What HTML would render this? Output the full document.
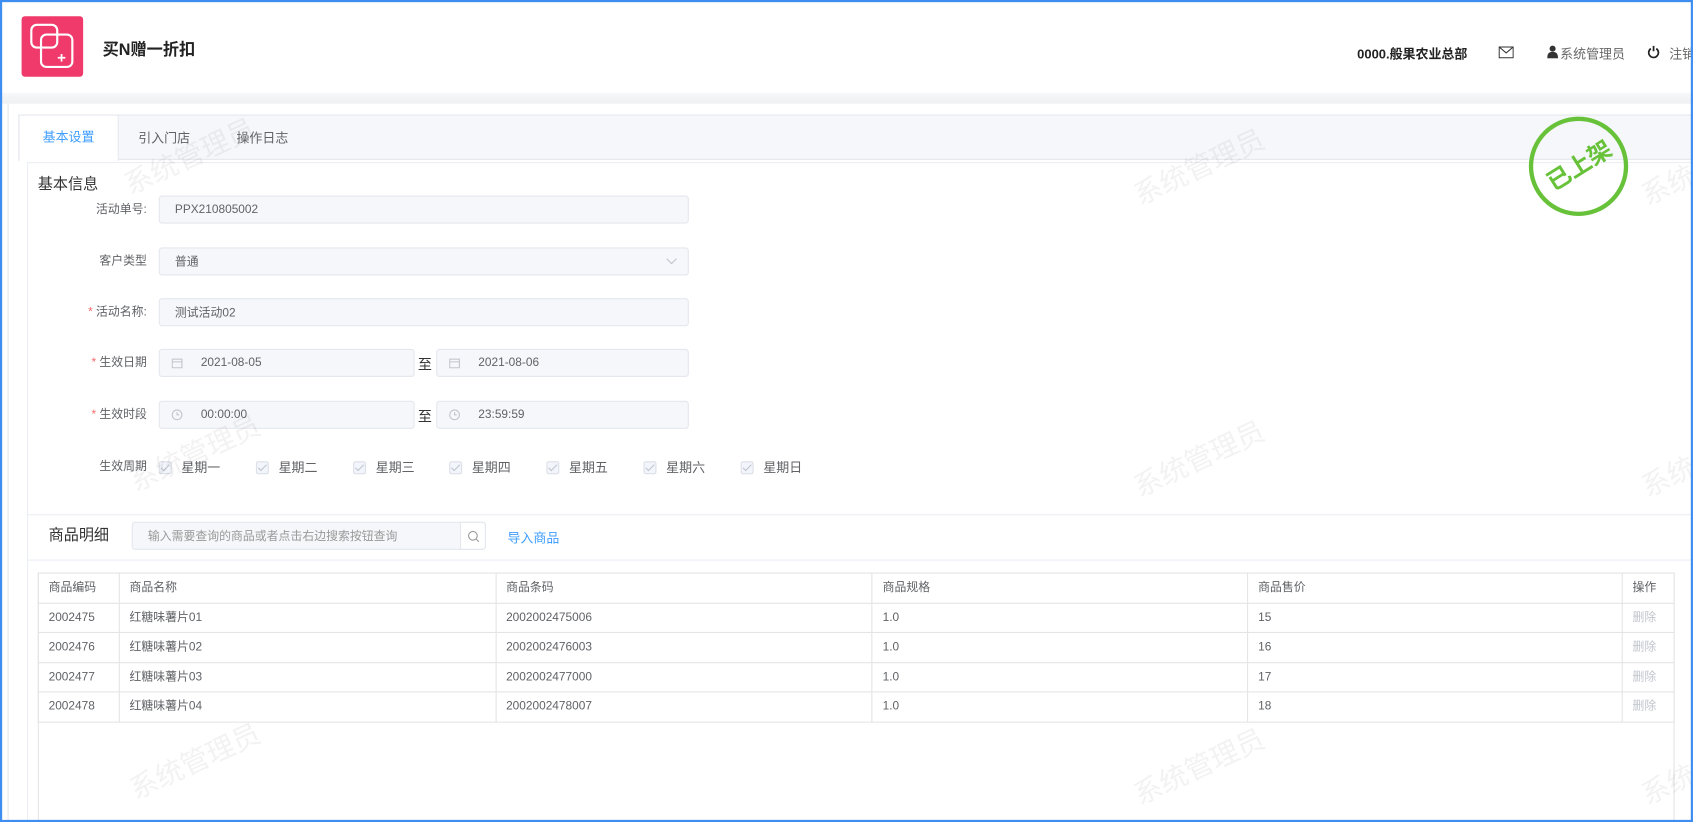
<!DOCTYPE html>
<html><head><meta charset="utf-8"><style>
*{margin:0;padding:0;box-sizing:border-box}
body{width:1693px;height:822px;overflow:hidden;background:#fff;font-family:"Liberation Sans","Noto Sans CJK SC",sans-serif;color:#606266}
#s{position:absolute;left:0;top:0;width:1568px;height:761px;transform:scale(1.0797,1.0802);transform-origin:0 0;overflow:hidden;background:#fff}
.a{position:absolute;white-space:nowrap}
.frame{position:absolute;left:0;top:0;width:1568px;height:761px;border:2px solid #3d8ef0;pointer-events:none;z-index:50}
.lbl{position:absolute;font-size:11px;color:#606266;text-align:right;width:120px;left:16px;line-height:26px}
.lbl i{color:#f56c6c;font-style:normal;margin-right:3px}
.inp{position:absolute;height:26px;background:#f5f7fa;border:1px solid #e4e7ed;border-radius:3px;font-size:11px;color:#606266;padding-left:14px;display:flex;align-items:center;white-space:nowrap}
.wm{position:absolute;font-size:26px;color:rgba(0,0,0,0.05);transform:rotate(-25deg);white-space:nowrap;z-index:40}
table{border-collapse:collapse;font-size:11px;color:#606266}
td{border:1px solid #e4e4e4;height:27.5px;padding-left:9px;vertical-align:middle;line-height:14px}
.cb{display:inline-block;width:12px;height:12px;border:1px solid #dcdfe6;background:#f2f6fc;border-radius:2px;vertical-align:-2px;margin-right:9px;position:relative}
.cb:after{content:"";position:absolute;left:3px;top:0;width:3px;height:7px;border:solid #c0c4cc;border-width:0 1px 1px 0;transform:rotate(45deg)}
.wk{position:absolute;top:424px;font-size:12px;color:#606266;white-space:nowrap}
</style></head><body><div id="s">
<div class="frame"></div>
<div class="a" style="left:20px;top:15px;width:57px;height:56px;background:#f03a6c;border-radius:3px">
<svg width="57" height="56" viewBox="0 0 57 56"><rect x="9" y="8" width="24" height="21" rx="5" fill="none" stroke="#fff" stroke-width="2"/><rect x="18" y="17" width="29" height="30" rx="5" fill="none" stroke="#fff" stroke-width="2"/><path d="M37 35v7M33.5 38.5h7" stroke="#fff" stroke-width="1.6"/></svg></div>
<div class="a" style="left:95px;top:35px;font-size:15px;font-weight:bold;color:#222">买N赠一折扣</div>
<div class="a" style="left:1257px;top:41px;font-size:12px;font-weight:bold;color:#222">0000.般果农业总部</div>
<svg class="a" style="left:1388px;top:43px" width="14" height="11" viewBox="0 0 14 11"><rect x="0.5" y="0.5" width="13" height="10" fill="none" stroke="#333"/><path d="M0.5 0.5L7 6L13.5 0.5" fill="none" stroke="#333"/></svg>
<svg class="a" style="left:1433px;top:42px" width="10" height="12" viewBox="0 0 10 12"><circle cx="5" cy="3" r="2.8" fill="#333"/><path d="M0 12C0 7 2 6 5 6S10 7 10 12Z" fill="#333"/></svg>
<div class="a" style="left:1445px;top:41px;font-size:12px;color:#666">系统管理员</div>
<svg class="a" style="left:1526px;top:42px" width="11" height="12" viewBox="0 0 11 12"><path d="M3 3A4.5 4.5 0 1 0 8 3" fill="none" stroke="#222" stroke-width="1.6"/><path d="M5.5 0.5v5" stroke="#222" stroke-width="1.6"/></svg>
<div class="a" style="left:1546px;top:41px;font-size:12px;color:#666">注销</div>
<div class="a" style="left:0;top:86px;width:1568px;height:10px;background:linear-gradient(#f7f8f9,#eff0f2)"></div>
<div class="a" style="left:7px;top:96px;width:1561px;height:665px;border-left:1px solid #e8e8e8"></div>
<div class="a" style="left:17px;top:106px;width:1551px;height:42px;background:#f5f7fa;border:1px solid #e4e7ed"></div>
<div class="a" style="left:17px;top:106px;width:93px;height:43px;background:#fff;border:1px solid #e4e7ed;border-bottom:none;font-size:12px;color:#409eff;text-align:center;line-height:40px">基本设置</div>
<div class="a" style="left:128px;top:119px;font-size:12px;color:#606266">引入门店</div>
<div class="a" style="left:219px;top:119px;font-size:12px;color:#606266">操作日志</div>
<div class="a" style="left:25px;top:150px;width:1543px;height:611px;border:1px solid #ebeef5"></div>
<div class="a" style="left:35px;top:160px;font-size:14px;color:#333">基本信息</div>
<div class="lbl" style="top:181px">活动单号:</div>
<div class="inp" style="left:147px;top:181px;width:491px">PPX210805002</div>
<div class="lbl" style="top:229px">客户类型</div>
<div class="inp" style="left:147px;top:229px;width:491px">普通<svg class="a" style="right:10px;top:9px" width="10" height="6"><path d="M0.5 0.5L5 5L9.5 0.5" fill="none" stroke="#c0c4cc"/></svg></div>
<div class="lbl" style="top:276px"><i>*</i>活动名称:</div>
<div class="inp" style="left:147px;top:276px;width:491px">测试活动02</div>
<div class="lbl" style="top:323px"><i>*</i>生效日期</div>
<div class="inp" style="left:147px;top:323px;width:237px;padding-left:38px">2021-08-05<svg class="a" style="left:11px;top:7px" width="10" height="10"><rect x="0.5" y="1.5" width="9" height="8" fill="none" stroke="#c0c4cc"/><path d="M0.5 4h9" stroke="#c0c4cc"/></svg></div>
<div class="a" style="left:387px;top:327px;font-size:13px;color:#333">至</div>
<div class="inp" style="left:404px;top:323px;width:234px;padding-left:38px">2021-08-06<svg class="a" style="left:11px;top:7px" width="10" height="10"><rect x="0.5" y="1.5" width="9" height="8" fill="none" stroke="#c0c4cc"/><path d="M0.5 4h9" stroke="#c0c4cc"/></svg></div>
<div class="lbl" style="top:371px"><i>*</i>生效时段</div>
<div class="inp" style="left:147px;top:371px;width:237px;padding-left:38px">00:00:00<svg class="a" style="left:11px;top:7px" width="10" height="10"><circle cx="5" cy="5" r="4.5" fill="none" stroke="#c0c4cc"/><path d="M5 2.5V5H7" fill="none" stroke="#c0c4cc"/></svg></div>
<div class="a" style="left:387px;top:375px;font-size:13px;color:#333">至</div>
<div class="inp" style="left:404px;top:371px;width:234px;padding-left:38px">23:59:59<svg class="a" style="left:11px;top:7px" width="10" height="10"><circle cx="5" cy="5" r="4.5" fill="none" stroke="#c0c4cc"/><path d="M5 2.5V5H7" fill="none" stroke="#c0c4cc"/></svg></div>
<div class="lbl" style="top:419px">生效周期</div>
<div class="wk" style="left:147px"><span class="cb"></span>星期一</div>
<div class="wk" style="left:237px"><span class="cb"></span>星期二</div>
<div class="wk" style="left:327px"><span class="cb"></span>星期三</div>
<div class="wk" style="left:416px"><span class="cb"></span>星期四</div>
<div class="wk" style="left:506px"><span class="cb"></span>星期五</div>
<div class="wk" style="left:596px"><span class="cb"></span>星期六</div>
<div class="wk" style="left:686px"><span class="cb"></span>星期日</div>
<div class="a" style="left:26px;top:476px;width:1542px;height:1px;background:#ebeef5"></div>
<div class="a" style="left:45px;top:485px;font-size:14px;color:#333">商品明细</div>
<div class="inp" style="left:122px;top:483px;width:328px;font-size:11px;color:#999">输入需要查询的商品或者点击右边搜索按钮查询</div>
<div class="a" style="left:426px;top:483px;width:24px;height:26px;border:1px solid #e4e7ed;border-radius:0 3px 3px 0;background:#fff"><svg style="position:absolute;left:6px;top:7px" width="11" height="11"><circle cx="5" cy="5" r="4" fill="none" stroke="#999"/><path d="M8 8l2.5 2.5" stroke="#999"/></svg></div>
<div class="a" style="left:470px;top:489px;font-size:12px;color:#409eff">导入商品</div>
<div class="a" style="left:26px;top:518px;width:1542px;height:1px;background:#ebeef5"></div>
<div class="a" style="left:35px;top:530px;width:1516px;height:240px;border:1px solid #e4e4e4"></div>
<table class="a" style="left:35px;top:530px;width:1516px">
<colgroup><col style="width:75px"><col style="width:349px"><col style="width:349px"><col style="width:348px"><col style="width:347px"><col style="width:48px"></colgroup>
<tr><td>商品编码</td><td>商品名称</td><td>商品条码</td><td>商品规格</td><td>商品售价</td><td>操作</td></tr>
<tr><td>2002475</td><td>红糖味薯片01</td><td>2002002475006</td><td>1.0</td><td>15</td><td style="color:#c0c4cc">删除</td></tr>
<tr><td>2002476</td><td>红糖味薯片02</td><td>2002002476003</td><td>1.0</td><td>16</td><td style="color:#c0c4cc">删除</td></tr>
<tr><td>2002477</td><td>红糖味薯片03</td><td>2002002477000</td><td>1.0</td><td>17</td><td style="color:#c0c4cc">删除</td></tr>
<tr><td>2002478</td><td>红糖味薯片04</td><td>2002002478007</td><td>1.0</td><td>18</td><td style="color:#c0c4cc">删除</td></tr>
</table>
<div class="a" style="left:1416px;top:108px;width:92px;height:92px;border:4px solid #67c23a;border-radius:50%;z-index:30"></div>
<div class="a" style="left:1416px;top:136px;width:92px;text-align:center;font-size:22px;font-weight:bold;color:#67c23a;transform:rotate(-32deg);z-index:30">已上架</div>
<div class="wm" style="left:110px;top:125px">系统管理员</div>
<div class="wm" style="left:1045px;top:135px">系统管理员</div>
<div class="wm" style="left:1515px;top:135px">系统管理员</div>
<div class="wm" style="left:115px;top:400px">系统管理员</div>
<div class="wm" style="left:1045px;top:405px">系统管理员</div>
<div class="wm" style="left:1515px;top:405px">系统管理员</div>
<div class="wm" style="left:115px;top:685px">系统管理员</div>
<div class="wm" style="left:1045px;top:690px">系统管理员</div>
<div class="wm" style="left:1515px;top:690px">系统管理员</div>
</div></body></html>
